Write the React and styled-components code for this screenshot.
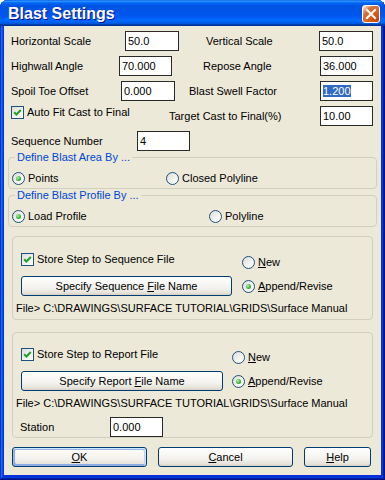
import React from 'react'
import styled, { createGlobalStyle } from 'styled-components'

const GlobalStyle = createGlobalStyle`
  html, body { margin: 0; padding: 0; background: #fff; }
  body {
    font-family: "Liberation Sans", Arial, sans-serif;
    font-size: 11px;
    color: #000;
  }
`

const Window = styled.div`
  width: 385px;
  height: 480px;
  box-sizing: border-box;
  display: flex;
  flex-direction: column;
  background: #0831d9;
  border-radius: 8px 8px 0 0;
  box-shadow: inset -1px -1px #00138c, inset 1px 1px #0831d9, inset -2px -2px #001ea0,
    inset 2px 2px #166aee, inset -3px -3px #003bda, inset 3px 3px #0855dd;
`

const TitleBar = styled.div`
  flex: none;
  height: 26px;
  box-sizing: border-box;
  display: flex;
  align-items: center;
  justify-content: space-between;
  padding: 1px 5px 0 8px;
  border-radius: 8px 8px 0 0;
  background: linear-gradient(180deg, #0058ee 0%, #3593ff 4%, #288eff 6%, #127dff 8%,
    #036ffc 10%, #0262ee 14%, #0057e5 20%, #0054e3 24%, #0055eb 56%, #005bf5 66%,
    #026afe 76%, #0062ef 86%, #0052d6 92%, #0040ab 94%, #003092 100%);
`

const Title = styled.span`
  font-size: 16px;
  font-weight: bold;
  color: #fff;
  text-shadow: 1px 1px 0 #0f1089;
`

const CloseButton = styled.div`
  width: 18px;
  height: 18px;
  box-sizing: border-box;
  border: 1px solid #fff;
  border-radius: 3px;
  display: flex;
  align-items: center;
  justify-content: center;
  background: radial-gradient(circle at 90% 90%, #cc4600 0%, #dc6527 55%, #cd7546 70%, #ffccb2 90%, #fff 100%);
`

const Body = styled.div`
  flex: 1;
  margin: 0 4px 5px;
  padding: 5px 4px 7px;
  background: #ece9d8;
  display: flex;
  flex-direction: column;
`

const FormRows = styled.div`
  display: flex;
  flex-direction: column;
  gap: 5px;
  padding: 0 4px 0 3px;
`

const Row = styled.div`
  display: flex;
  align-items: center;
  height: 20px;
`

const Label = styled.span`
  flex: ${({ $w }) => ($w ? `0 0 ${$w}px` : '1 1 0')};
  padding-left: ${({ $pad }) => $pad || 0}px;
  white-space: nowrap;
  line-height: 13px;
`

const Field = styled.div`
  flex: none;
  width: ${({ $w }) => $w || 54}px;
  height: 20px;
  box-sizing: border-box;
  border: 1px solid #2a2a2a;
  background: #fff;
  padding: 2px 2px 0;
  line-height: 14px;
  white-space: nowrap;
`

const Selected = styled.span`
  background: #316ac5;
  color: #fff;
`

const Choice = styled.span`
  display: inline-flex;
  align-items: center;
  gap: 3px;
  line-height: 13px;
  white-space: nowrap;
  align-self: ${({ $align }) => $align || 'center'};
  flex: ${({ $w }) => ($w ? `0 0 ${$w}px` : 'none')};
`

const Box = styled.span`
  flex: none;
  width: 13px;
  height: 13px;
  box-sizing: border-box;
  border: 1px solid #1c5180;
  background: linear-gradient(135deg, #dcdcd7 0%, #f4f4f1 60%, #fff 100%);
  display: flex;
`

const Dot = styled.span`
  flex: none;
  width: 13px;
  height: 13px;
  box-sizing: border-box;
  border: 1px solid #1c5180;
  border-radius: 50%;
  background: linear-gradient(135deg, #dcdcd7 0%, #f4f4f1 60%, #fff 100%);
  display: grid;
  place-items: center;

  &::after {
    content: '';
    width: 5px;
    height: 5px;
    border-radius: 50%;
    display: ${({ $on }) => ($on ? 'block' : 'none')};
    background: radial-gradient(circle at 35% 35%, #b4f0b0 0%, #3bb738 55%, #1a8a18 100%);
  }
`

const Group = styled.fieldset`
  margin: ${({ $top }) => $top || 0}px ${({ $side }) => $side || 0}px 0;
  padding: ${({ $pad }) => $pad};
  border: 1px solid #d0d0bf;
  border-radius: 4px;
  min-width: 0;
`

const Legend = styled.legend`
  margin-left: 3px;
  padding: 0 2px;
  line-height: 13px;
  color: #0046d5;
`

const OptionRow = styled.div`
  display: grid;
  grid-template-columns: ${({ $split }) => $split}px auto;
  align-items: center;
`

const StepGrid = styled.div`
  display: grid;
  grid-template-columns: ${({ $btn }) => $btn}px auto;
  grid-template-rows: 16px 20px;
  column-gap: ${({ $gap }) => $gap}px;
  row-gap: 7px;
  padding-left: 8px;
`

const PathText = styled.div`
  margin-top: 6px;
  padding-left: 3px;
  line-height: 13px;
  white-space: nowrap;
`

const StationRow = styled.div`
  display: flex;
  align-items: center;
  margin-top: 7px;
  padding-left: 7px;
`

const ButtonBar = styled.div`
  display: flex;
  gap: 11px;
  margin-top: 9px;
  padding-left: 4px;
`

const Button = styled.button`
  width: ${({ $w }) => $w}px;
  height: 20px;
  box-sizing: border-box;
  padding: 0;
  border: 1px solid #003c74;
  border-radius: 3px;
  background: linear-gradient(180deg, #fff 0%, #f3f2ee 60%, #e6e3da 88%, #d6d0c5 100%);
  font: inherit;
  color: #000;
  line-height: 13px;
  align-self: center;
  box-shadow: ${({ $default }) =>
    $default
      ? 'inset -1px 1px #cee7ff, inset 1px 2px #98b8ea, inset -2px 2px #bcd4f6, inset 1px -1px #89ade4, inset 2px -2px #89ade4'
      : 'none'};
`

const Check = ({ children, $align, $w }) => (
  <Choice $align={$align} $w={$w}>
    <Box>
      <svg width="11" height="11" viewBox="0 0 11 11">
        <path d="M2.2 5.3 L4.4 7.5 L8.8 3" fill="none" stroke="#21a121" strokeWidth="2" />
      </svg>
    </Box>
    <span>{children}</span>
  </Choice>
)

const Radio = ({ on, children, $align }) => (
  <Choice $align={$align}>
    <Dot $on={on} />
    <span>{children}</span>
  </Choice>
)

const StepGroup = ({ top, btn, gap, pad, what, children }) => (
  <Group $top={top} $side={4} $pad={pad}>
    <StepGrid $btn={btn} $gap={gap}>
      <Check $align="start">Store Step to {what} File</Check>
      <Radio $align="end"><u>N</u>ew</Radio>
      <Button $w={btn}>Specify {what} <u>F</u>ile Name</Button>
      <Radio on><u>A</u>ppend/Revise</Radio>
    </StepGrid>
    <PathText>File&gt; C:\DRAWINGS\SURFACE TUTORIAL\GRIDS\Surface Manual</PathText>
    {children}
  </Group>
)

export default function App() {
  return (
    <>
      <GlobalStyle />
      <Window>
        <TitleBar>
          <Title>Blast Settings</Title>
          <CloseButton>
            <svg width="12" height="12" viewBox="0 0 12 12">
              <path d="M2 2 L10 10 M10 2 L2 10" stroke="#fff" strokeWidth="2" strokeLinecap="square" />
            </svg>
          </CloseButton>
        </TitleBar>
        <Body>
          <FormRows>
            <Row>
              <Label $w={114}>Horizontal Scale</Label>
              <Field $w={54}>50.0</Field>
              <Label $pad={27}>Vertical Scale</Label>
              <Field $w={54}>50.0</Field>
            </Row>
            <Row>
              <Label $w={108}>Highwall Angle</Label>
              <Field $w={53}>70.000</Field>
              <Label $pad={31}>Repose Angle</Label>
              <Field $w={53}>36.000</Field>
            </Row>
            <Row>
              <Label $w={110}>Spoil Toe Offset</Label>
              <Field $w={54}>0.000</Field>
              <Label $pad={14}>Blast Swell Factor</Label>
              <Field $w={53}><Selected>1.200</Selected></Field>
            </Row>
            <Row>
              <Check $align="flex-start" $w={158}>Auto Fit Cast to Final</Check>
              <Label>Target Cast to Final(%)</Label>
              <Field $w={53}>10.00</Field>
            </Row>
            <Row>
              <Label $w={126}>Sequence Number</Label>
              <Field $w={53}>4</Field>
            </Row>
          </FormRows>

          <Group $pad="8px 0 3px 3px">
            <Legend>Define Blast Area By ...</Legend>
            <OptionRow $split={154}>
              <Radio on>Points</Radio>
              <Radio>Closed Polyline</Radio>
            </OptionRow>
          </Group>

          <Group $pad="8px 0 3px 3px">
            <Legend>Define Blast Profile By ...</Legend>
            <OptionRow $split={197}>
              <Radio on>Load Profile</Radio>
              <Radio>Polyline</Radio>
            </OptionRow>
          </Group>

          <StepGroup top={9} btn={211} gap={10} pad="16px 0 4px" what="Sequence" />

          <StepGroup top={12} btn={202} gap={9} pad="15px 0 0" what="Report">
            <StationRow>
              <Label $w={90}>Station</Label>
              <Field $w={53}>0.000</Field>
            </StationRow>
          </StepGroup>

          <ButtonBar>
            <Button $w={135} $default><u>O</u>K</Button>
            <Button $w={135}><u>C</u>ancel</Button>
            <Button $w={67}><u>H</u>elp</Button>
          </ButtonBar>
        </Body>
      </Window>
    </>
  )
}
